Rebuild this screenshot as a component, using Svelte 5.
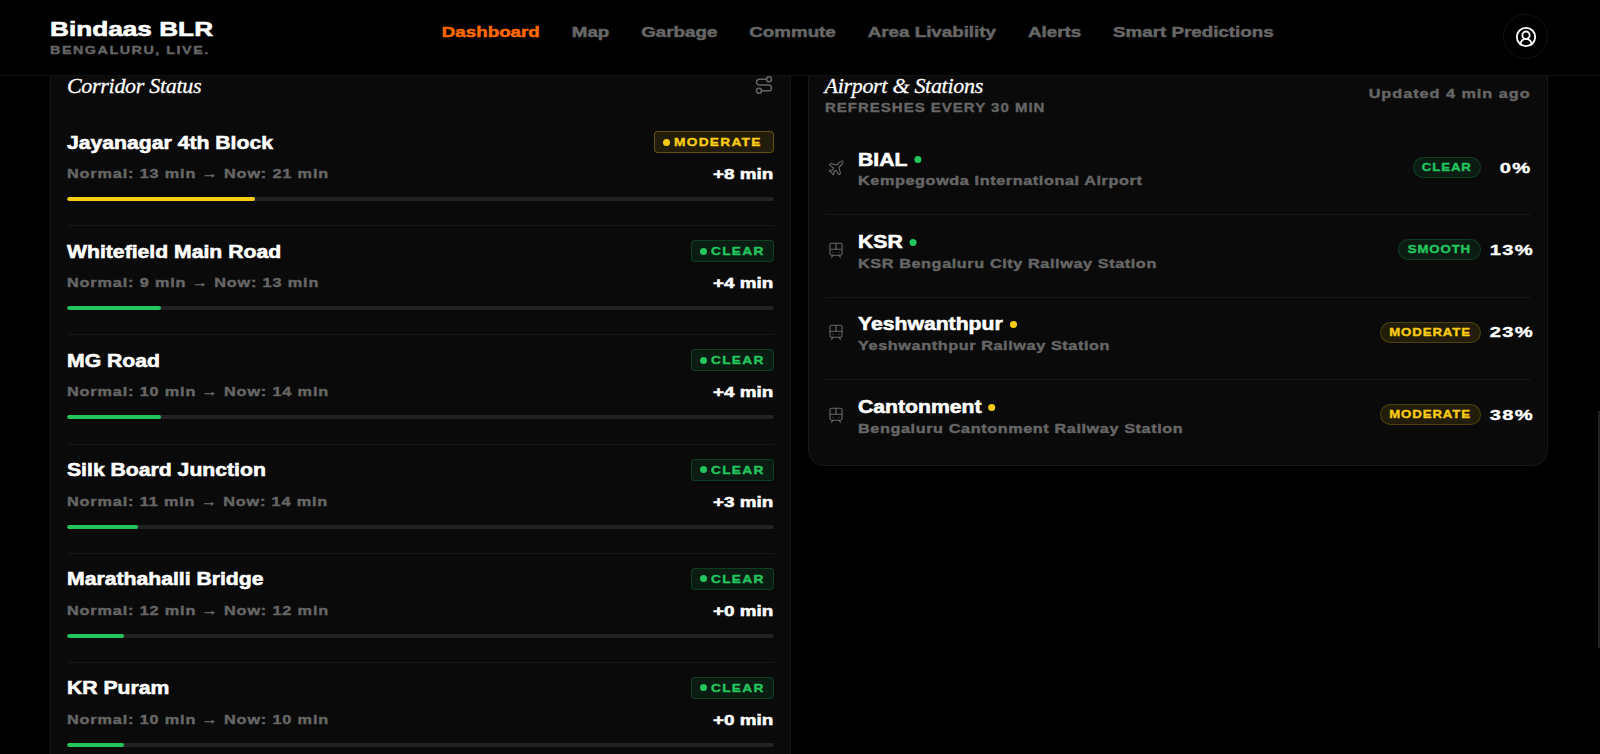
<script>
  const navItems = ['Dashboard', 'Map', 'Garbage', 'Commute', 'Area Livability', 'Alerts', 'Smart Predictions'];

  const corridors = [
    { name: 'Jayanagar 4th Block', normal: 13, now: 21, fill: 26.67, status: 'moderate' },
    { name: 'Whitefield Main Road', normal: 9, now: 13, fill: 13.33, status: 'clear' },
    { name: 'MG Road', normal: 10, now: 14, fill: 13.33, status: 'clear' },
    { name: 'Silk Board Junction', normal: 11, now: 14, fill: 10, status: 'clear' },
    { name: 'Marathahalli Bridge', normal: 12, now: 12, fill: 8, status: 'clear' },
    { name: 'KR Puram', normal: 10, now: 10, fill: 8, status: 'clear' }
  ];

  const stations = [
    { name: 'BIAL', full: 'Kempegowda International Airport', label: 'clear', pct: 0, status: 'clear', plane: true },
    { name: 'KSR', full: 'KSR Bengaluru City Railway Station', label: 'smooth', pct: 13, status: 'clear' },
    { name: 'Yeshwanthpur', full: 'Yeshwanthpur Railway Station', label: 'moderate', pct: 23, status: 'moderate' },
    { name: 'Cantonment', full: 'Bengaluru Cantonment Railway Station', label: 'moderate', pct: 38, status: 'moderate' }
  ];
</script>

<div class="page">
  <header>
    <div class="brand">
      <div class="brand-name">Bindaas BLR</div>
      <div class="brand-tag">BENGALURU, LIVE.</div>
    </div>
    <div class="nav-wrap">
      <nav>
        {#each navItems as item, i}
          <span class="nav-item" class:active={i === 0}>{item}</span>
        {/each}
      </nav>
    </div>
    <button class="user" aria-label="Account">
      <svg width="22" height="22" viewBox="0 0 24 24" fill="none" stroke="currentColor" stroke-width="2" stroke-linecap="round" stroke-linejoin="round">
        <path d="M18 20a6 6 0 0 0-12 0" />
        <circle cx="12" cy="10" r="4" />
        <circle cx="12" cy="12" r="10" />
      </svg>
    </button>
  </header>

  <main>
    <section class="card corridors">
      <div class="card-head">
        <h2>Corridor Status</h2>
        <svg class="route" width="20" height="20" viewBox="0 0 24 24" fill="none" stroke="currentColor" stroke-width="1.75" stroke-linecap="round" stroke-linejoin="round">
          <circle cx="6" cy="19" r="3" />
          <path d="M9 19h8.5a3.5 3.5 0 0 0 0-7h-11a3.5 3.5 0 0 1 0-7H15" />
          <circle cx="18" cy="5" r="3" />
        </svg>
      </div>

      {#each corridors as c}
        <div class="corridor">
          <div class="line">
            <span class="title">{c.name}</span>
            <span class="badge {c.status}"><i></i><b>{c.status.toUpperCase()}</b></span>
          </div>
          <div class="line second">
            <span class="muted">Normal: {c.normal} min → Now: {c.now} min</span>
            <span class="delta">+{c.now - c.normal} min</span>
          </div>
          <div class="track">
            <div class="fill {c.status}" style="width: {c.fill}%"></div>
          </div>
        </div>
      {/each}
    </section>

    <section class="card stations">
      <div class="card-head">
        <div>
          <h2>Airport &amp; Stations</h2>
          <div class="refresh">REFRESHES EVERY 30 MIN</div>
        </div>
        <span class="muted updated">Updated 4 min ago</span>
      </div>

      {#each stations as s}
        <div class="station">
          <svg class="s-icon" width="18" height="18" viewBox="0 0 24 24" fill="none" stroke="currentColor" stroke-width="1.5" stroke-linecap="round" stroke-linejoin="round">
            {#if s.plane}
              <path d="M17.8 19.2 16 11l3.5-3.5C21 6 21.5 4 21 3c-1-.5-3 0-4.5 1.5L13 8 4.8 6.2c-.5-.1-.9.1-1.1.5l-.3.5c-.2.5-.1 1 .3 1.3L9 12l-2 3H4l-1 1 3 2 2 3 1-1v-3l3-2 3.5 5.3c.3.4.8.5 1.3.3l.5-.2c.4-.3.6-.7.5-1.2z" />
            {:else}
              <rect width="16" height="16" x="4" y="3" rx="2" />
              <path d="M4 11h16" />
              <path d="M12 3v8" />
              <path d="m8 19-2 3" />
              <path d="m18 22-2-3" />
              <path d="M8 15h.01" />
              <path d="M16 15h.01" />
            {/if}
          </svg>
          <div class="s-text">
            <div class="title s-name">{s.name}<i class="dot {s.status}"></i></div>
            <div class="muted s-full">{s.full}</div>
          </div>
          <span class="pill {s.status} w-{s.label}"><b>{s.label.toUpperCase()}</b></span>
          <span class="pct" class:zero={s.pct === 0}><b>{s.pct}%</b></span>
        </div>
      {/each}
    </section>
  </main>
  <div class="thumb"></div>
</div>

<style>
  :global(body) {
    background: #000;
    overflow: hidden;
  }

  .page {
    height: 754px;
    overflow: hidden;
    position: relative;
    background: #000;
    color: #fff;
    font-family: "Liberation Sans", Arial, sans-serif;
    font-weight: 700;
    -webkit-text-stroke: 0.35px currentColor;
  }

  /* no wide grotesque installed, so the text gets stretched on x */
  .brand-name,
  .brand-tag,
  .title,
  .muted,
  .delta,
  .refresh,
  nav,
  .badge b,
  .pill b,
  .pct b {
    white-space: nowrap;
    transform-origin: left center;
  }

  header {
    height: 76px;
    box-sizing: border-box;
    padding: 14px 52px 0 50px;
    display: flex;
    align-items: flex-start;
    border-bottom: 1px solid #111;
  }

  .brand {
    width: 163px;
  }

  .brand-name {
    font-size: 20px;
    line-height: 28px;
    margin-top: 1px;
    transform: scaleX(1.31);
    -webkit-text-stroke: 0.6px currentColor;
  }

  .brand-tag {
    font-size: 11.5px;
    line-height: 14px;
    letter-spacing: 1.2px;
    color: #666;
    transform: scaleX(1.25);
  }

  .nav-wrap {
    flex: 1;
    display: flex;
    justify-content: center;
  }

  nav {
    display: flex;
    gap: 25.6px;
    padding-top: 9px;
    transform: scaleX(1.25);
    transform-origin: center;
  }

  .nav-item {
    font-size: 15px;
    line-height: 18px;
    color: #666;
    -webkit-text-stroke: 0.5px currentColor;
  }

  .nav-item.active {
    color: #ff6a00;
  }

  .user {
    width: 45px;
    height: 45px;
    padding: 0;
    border-radius: 50%;
    border: 1px solid #111;
    background: #000;
    color: #fff;
    display: flex;
    align-items: center;
    justify-content: center;
  }

  main {
    display: flex;
    align-items: flex-start;
    gap: 17px;
    padding: 0 52px 0 50px;
  }

  .card {
    flex: 1;
    box-sizing: border-box;
    padding: 0 16px 24px;
    background: #0a0a0a;
    border: 1px solid #161616;
    border-top: none;
    border-radius: 0 0 16px 16px;
  }

  .card-head {
    display: flex;
    justify-content: space-between;
    align-items: flex-start;
  }

  h2 {
    margin: 0;
    font-family: "Liberation Serif", serif;
    font-style: italic;
    font-weight: 400;
    font-size: 22px;
    line-height: 20px;
    letter-spacing: -0.3px;
    -webkit-text-stroke: 0.3px currentColor;
  }

  .route {
    color: #666;
    margin-top: -1px;
  }

  .corridors .card-head {
    height: 41px;
  }

  .corridor {
    padding: 14px 0 24.2px;
    border-bottom: 1px solid #161616;
  }

  .line {
    display: flex;
    justify-content: space-between;
    align-items: center;
  }

  .second {
    margin-top: 13px;
  }

  .title {
    font-size: 17.5px;
    transform: scaleX(1.21);
    -webkit-text-stroke: 0.55px currentColor;
  }

  .corridor .title {
    transform: translateY(1px) scaleX(1.21);
  }

  .muted {
    display: inline-block;
    color: #666;
    font-size: 12.5px;
    letter-spacing: 0.65px;
    transform: scaleX(1.3);
    -webkit-text-stroke: 0.4px currentColor;
  }

  .delta {
    font-size: 14.5px;
    transform: scaleX(1.3);
    transform-origin: right center;
    -webkit-text-stroke: 0.5px currentColor;
  }

  .badge {
    display: flex;
    align-items: center;
    gap: 4px;
    height: 22px;
    box-sizing: border-box;
    padding: 0 0 0 8px;
    border-radius: 4px;
    font-size: 11px;
    letter-spacing: 1px;
  }

  .badge b,
  .pill b {
    display: inline-block;
    font-weight: 700;
    transform: scaleX(1.25);
  }

  .badge i {
    width: 7px;
    height: 7px;
    border-radius: 50%;
    background: currentColor;
  }

  .badge.moderate {
    width: 119.5px;
  }

  .badge.clear {
    width: 82.5px;
  }

  .badge.clear,
  .pill.clear {
    color: #22c55e;
    background: rgba(34, 197, 94, 0.1);
    border: 1px solid rgba(34, 197, 94, 0.2);
  }

  .badge.moderate,
  .pill.moderate {
    color: #facc15;
    background: rgba(250, 204, 21, 0.1);
    border: 1px solid rgba(250, 204, 21, 0.2);
  }

  .badge.moderate {
    border-color: rgba(250, 204, 21, 0.3);
  }

  .track {
    height: 4px;
    margin-top: 15px;
    border-radius: 2px;
    background: #222;
    overflow: hidden;
  }

  .fill {
    height: 100%;
    border-radius: 2px;
  }

  .fill.clear {
    background: #22c55e;
  }

  .fill.moderate {
    background: #facc15;
  }

  .stations {
    padding-bottom: 3px;
  }

  .stations .card-head {
    height: 57px;
  }

  .refresh {
    margin-top: 5px;
    font-size: 12px;
    line-height: 15px;
    letter-spacing: 0.8px;
    color: #666;
    transform: scaleX(1.25);
  }

  .updated {
    margin-top: 11px;
    line-height: 15px;
    letter-spacing: 0.75px;
    transform-origin: right center;
  }

  .station {
    display: flex;
    align-items: center;
    height: 82.25px;
    box-sizing: border-box;
    padding: 15px 0 27px;
    border-bottom: 1px solid #161616;
  }

  .station:last-child {
    border-bottom: none;
  }

  .s-icon {
    flex: none;
    margin: 0 13px 0 2.5px;
    color: #666;
  }

  .s-text {
    flex: 1;
    padding-top: 4px;
  }

  .s-name {
    display: flex;
    align-items: center;
    gap: 5px;
    line-height: 22px;
  }

  .dot {
    width: 7px;
    height: 7px;
    border-radius: 50%;
    transform: scaleX(0.83);
  }

  .dot.clear {
    background: #22c55e;
  }

  .dot.moderate {
    background: #facc15;
  }

  .s-full {
    display: block;
    line-height: 17px;
    margin-top: 2.5px;
    letter-spacing: 0.45px;
  }

  .pill {
    height: 21px;
    box-sizing: border-box;
    border-radius: 999px;
    font-size: 11px;
    line-height: 19px;
    letter-spacing: 0.75px;
    text-align: center;
  }

  .pill b {
    transform: scaleX(1.2);
    transform-origin: center;
  }

  .w-clear {
    width: 68px;
  }

  .w-smooth {
    width: 83px;
  }

  .w-moderate {
    width: 101px;
  }

  .pct {
    width: 39px;
    margin: 0 -3px 0 14.5px;
    text-align: right;
    font-size: 15.5px;
    letter-spacing: 1px;
  }

  .pct.zero {
    margin: 0 0 0 11.5px;
  }

  .pct b {
    display: inline-block;
    transform: scaleX(1.3);
    transform-origin: right center;
  }

  .thumb {
    position: absolute;
    right: 0;
    top: 411px;
    width: 2px;
    height: 237px;
    background: #222;
  }
</style>
